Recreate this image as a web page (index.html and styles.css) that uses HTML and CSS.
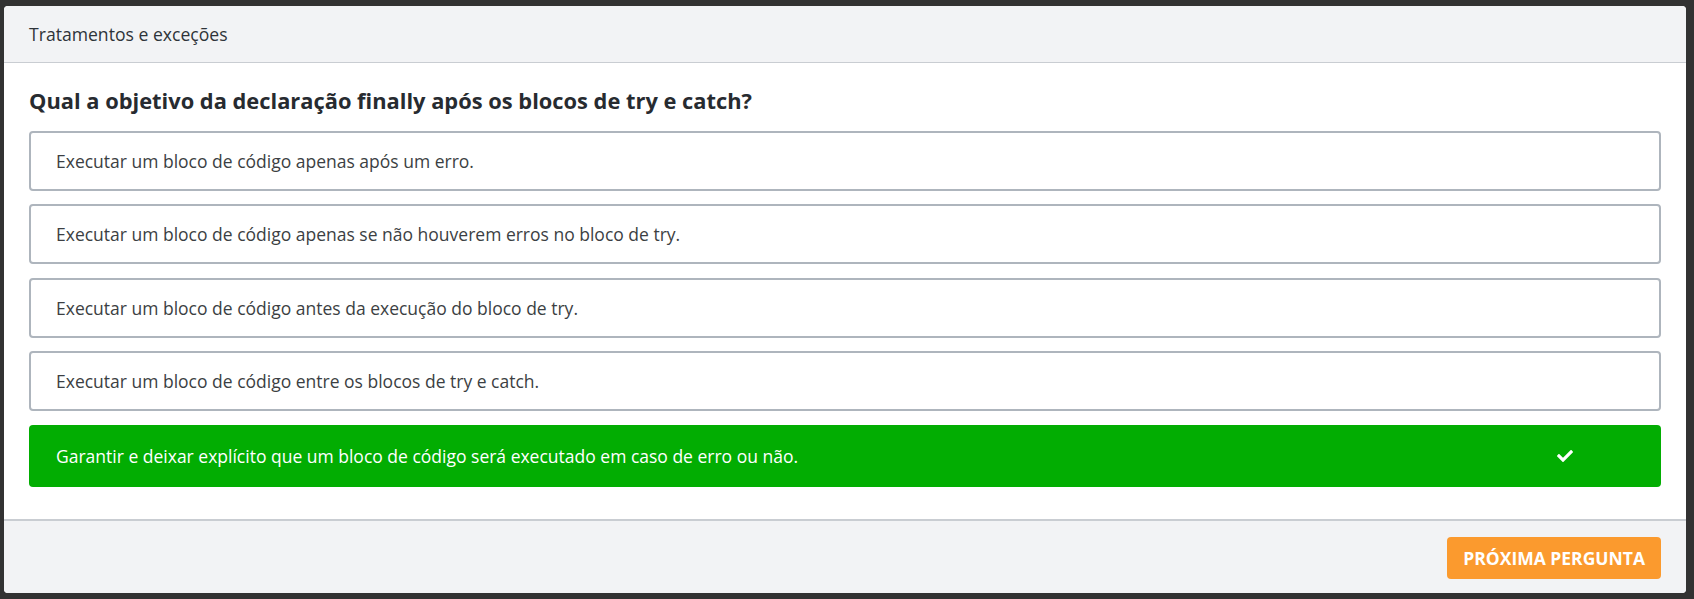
FILE: index.html
```html
<!DOCTYPE html>
<html lang="pt-BR">
<head>
<meta charset="utf-8">
<title>Tratamentos e exceções</title>
<link rel="stylesheet" href="styles.css">
</head>
<body>
<div class="card">
  <div class="card-header">Tratamentos e exceções</div>
  <div class="card-body">
    <h2 class="question">Qual a objetivo da declaração finally após os blocos de try e catch?</h2>
    <ul class="options">
      <li class="option">Executar um bloco de código apenas após um erro.</li>
      <li class="option">Executar um bloco de código apenas se não houverem erros no bloco de try.</li>
      <li class="option">Executar um bloco de código antes da execução do bloco de try.</li>
      <li class="option">Executar um bloco de código entre os blocos de try e catch.</li>
      <li class="option correct">
        <span class="option-text">Garantir e deixar explícito que um bloco de código será executado em caso de erro ou não.</span>
        <svg class="check" viewBox="0 0 512 512" aria-hidden="true"><path d="M173.898 439.404l-166.4-166.4c-9.997-9.997-9.997-26.206 0-36.204l36.203-36.204c9.997-9.998 26.207-9.998 36.204 0L192 312.69 432.095 72.596c9.997-9.997 26.207-9.997 36.204 0l36.203 36.204c9.997 9.997 9.997 26.206 0 36.204l-294.4 294.401c-9.998 9.997-26.207 9.997-36.204-.001z" fill="#fff"/></svg>
      </li>
    </ul>
  </div>
  <div class="card-footer">
    <button class="btn-next" type="button">Próxima pergunta</button>
  </div>
</div>
</body>
</html>
```
FILE: styles.css
```css
* { box-sizing: border-box; }
html, body { height: 100%; }
body {
  margin: 0;
  background: #323232;
  padding: 6px 8px 6px 4px;
  font-family: "Open Sans", "Noto Sans", sans-serif;
}
.card {
  background: #fff;
  border-radius: 4px;
  height: 587px;
  display: flex;
  flex-direction: column;
  overflow: hidden;
}
.card-header {
  background: #f2f3f5;
  border-bottom: 1px solid #c9cdd2;
  height: 57px;
  line-height: 56px;
  padding: 0 25px;
  font-size: 17.6px;
  color: #2e3339;
}
.card-body {
  padding: 22.5px 25px 0 25px;
  flex: 1;
}
.question {
  margin: 0 0 15px 0;
  font-size: 21.85px;
  line-height: 30px;
  font-weight: 700;
  color: #272b30;
}
.options {
  list-style: none;
  margin: 0;
  padding: 0;
  display: flex;
  flex-direction: column;
  gap: 13.5px;
}
.option {
  height: 60px;
  border: 2px solid #aeb5bd;
  border-radius: 4px;
  padding: 0 25px;
  display: flex;
  align-items: center;
  font-size: 17.5px;
  color: #3c3f43;
}
.option.correct {
  height: 62px;
  border: none;
  background: #02ad02;
  color: #fff;
  padding: 0 88px 0 27px;
  justify-content: space-between;
}
.check {
  width: 16px;
  height: 16px;
}
.card-footer {
  background: #f2f3f5;
  border-top: 2px solid #c9cdd2;
  height: 74px;
  padding: 16px 25px 0 25px;
  display: flex;
  justify-content: flex-end;
  align-items: flex-start;
}
.btn-next {
  height: 42px;
  padding: 0 16px;
  border: none;
  border-radius: 4px;
  background: #fb9a2e;
  color: #fff;
  font-family: "Open Sans", "Noto Sans", sans-serif;
  font-weight: 700;
  font-size: 17.5px;
  text-transform: uppercase;
}
```
